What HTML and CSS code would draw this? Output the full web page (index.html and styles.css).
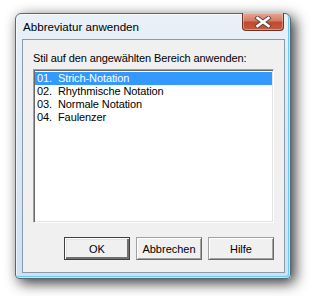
FILE: index.html
```html
<!DOCTYPE html>
<html lang="de">
<head>
  <meta charset="UTF-8" />
  <title>Abbreviatur anwenden</title>
  <link rel="stylesheet" href="styles.css">
</head>
<body>
  <div class="window">
    <header class="titlebar">
      <span class="title">Abbreviatur anwenden</span>
      <button class="close" aria-label="Schließen">
        <svg width="18" height="12" viewBox="0 0 18 12">
          <path d="M3.5 2 L14.5 10 M14.5 2 L3.5 10" stroke="#5a4844" stroke-width="4.4" stroke-linecap="square" fill="none"/>
          <path d="M3.5 2 L14.5 10 M14.5 2 L3.5 10" stroke="#fff" stroke-width="2.6" stroke-linecap="square" fill="none"/>
        </svg>
      </button>
    </header>
    <main class="client">
      <div class="label">Stil auf den angewählten Bereich anwenden:</div>
      <ul class="list">
        <li class="item selected"><span class="num">01.</span>Strich-Notation</li>
        <li class="item"><span class="num">02.</span>Rhythmische Notation</li>
        <li class="item"><span class="num">03.</span>Normale Notation</li>
        <li class="item"><span class="num">04.</span>Faulenzer</li>
      </ul>
      <div class="buttons">
        <button class="btn default">OK</button>
        <button class="btn">Abbrechen</button>
        <button class="btn">Hilfe</button>
      </div>
    </main>
  </div>
</body>
</html>
```

FILE: styles.css
```css
* {
  margin: 0;
  padding: 0;
  box-sizing: border-box;
}

body {
  background: #fff;
  width: 312px;
  height: 296px;
  overflow: hidden;
  padding: 13px 0 0 15px;
}

.window {
  width: 276px;
  height: 266px;
  border: 1px solid #56687a;
  border-radius: 6px 6px 4px 4px;
  background: linear-gradient(#e9f0f8, #dae7f4 50%, #cde1f5);
  box-shadow: 4px 4px 14px rgba(0, 0, 0, 0.8), inset 0 0 0 1px rgba(255, 255, 255, 0.6), inset -1px -1px 0 1px #6fc8ee;
  padding: 0 5px 5px 6px;
  display: flex;
  flex-direction: column;
}

.titlebar {
  height: 25px;
  display: flex;
  align-items: flex-start;
  justify-content: space-between;
}

.title {
  font-family: "Liberation Sans", Arial, sans-serif;
  font-size: 11.6px;
  color: #000;
  padding: 6px 0 0 1px;
  line-height: 14px;
}

.close {
  width: 42px;
  height: 18px;
  margin: -1px 1px 0 0;
  border: 1px solid #6e3226;
  border-top: none;
  border-radius: 0 0 4px 4px;
  background: linear-gradient(#e9a896, #d47b63 45%, #bf4a2f 55%, #c75a3d);
  box-shadow: inset 0 0 0 1px rgba(255, 210, 200, 0.45);
  display: flex;
  align-items: center;
  justify-content: center;
}

.client {
  flex: 1;
  background: #f0f0f0;
  border: 1px solid #8a9aab;
  padding: 12px 10px 12px 10px;
  font-family: Tahoma, "Liberation Sans", sans-serif;
  font-size: 11px;
  letter-spacing: -0.1px;
  color: #000;
}

.label {
  height: 13px;
  line-height: 13px;
  margin-bottom: 4px;
}

.list {
  list-style: none;
  height: 154px;
  background: #fff;
  border: 1px solid;
  border-color: #a0a0a0 #fff #fff #a0a0a0;
  box-shadow: inset 1px 1px 0 #696969, inset -1px -1px 0 #e3e3e3;
  padding: 2px 1px 1px 1px;
}

.item {
  height: 13px;
  line-height: 13px;
  padding-left: 2px;
  white-space: nowrap;
}

.item.selected {
  background: #3399ff;
  color: #fff;
}

.num {
  display: inline-block;
  width: 21px;
}

.buttons {
  margin-top: 14px;
  display: flex;
  justify-content: flex-end;
  gap: 6px;
}

.btn {
  width: 66px;
  height: 23px;
  font-family: Tahoma, "Liberation Sans", sans-serif;
  font-size: 11px;
  color: #000;
  background: #f0f0f0;
  border: 1px solid;
  border-color: #a0a0a0 #696969 #696969 #a0a0a0;
  box-shadow: inset 1px 1px 0 #fff, inset -1px -1px 0 #a0a0a0;
}

.btn.default {
  border: 1px solid #404040;
  box-shadow: inset 1px 1px 0 #fff, inset -2px -2px 0 #707070, inset 2px 2px 0 #e3e3e3;
}
```
